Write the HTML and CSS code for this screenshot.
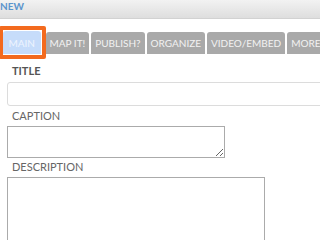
FILE: index.html
```html
<!DOCTYPE html>
<html lang="en">
  <head>
    <meta charset="UTF-8" />
    <meta name="viewport" content="width=device-width, initial-scale=1" />
    <title>New Item</title>
    <link rel="stylesheet" href="styles.css">
  </head>
  <body>
    <header class="top-bar">
      <span class="top-title">NEW</span>
    </header>

    <nav class="tabs">
      <a class="tab tab-active" href="#">MAIN</a>
      <a class="tab" href="#">MAP IT!</a>
      <a class="tab" href="#">PUBLISH?</a>
      <a class="tab" href="#">ORGANIZE</a>
      <a class="tab" href="#">VIDEO/EMBED</a>
      <a class="tab" href="#">MORE</a>
    </nav>

    <form class="edit-form">
      <label class="field-label field-label-strong" for="title">TITLE</label>
      <input class="title-input" id="title" type="text" />

      <label class="field-label" for="caption">CAPTION</label>
      <textarea class="caption-box" id="caption"></textarea>

      <label class="field-label" for="description">DESCRIPTION</label>
      <textarea class="description-box" id="description"></textarea>
    </form>
  </body>
</html>
```

FILE: styles.css
```css
html,
body {
  margin: 0;
  padding: 0;
  overflow: hidden;
  background: #fff;
  font-family: Lato, "Open Sans", Arial, sans-serif;
}
.top-bar {
  height: 18px;
  background: linear-gradient(#f2f2f2, #dedede);
  border-bottom: 1px solid #d2d2d2;
}
.top-title {
  display: block;
  color: #5b95cd;
  font-size: 10px;
  font-weight: 700;
  line-height: 13px;
}
.tabs {
  display: flex;
  align-items: flex-end;
  gap: 2px;
  margin-top: 12px;
  padding-left: 3px;
  white-space: nowrap;
}
.tab {
  flex: none;
  height: 22px;
  line-height: 22px;
  padding: 0 4px;
  background: #a9a9a9;
  color: #f2f2f2;
  font-size: 10px;
  text-decoration: none;
  border-radius: 3px 3px 0 0;
}
.tab-active {
  position: relative;
  height: 23px;
  line-height: 24px;
  margin-right: 3px;
  padding: 0 5.5px;
  background: #c6dcfa;
  color: #eef4fe;
}
.tab-active::after {
  content: "";
  position: absolute;
  top: -5px;
  left: -4px;
  right: -5px;
  bottom: -5px;
  border: 4px solid #f36a1e;
  border-radius: 2px;
}
.edit-form {
  padding: 10px 0 0 7px;
}
.field-label {
  display: block;
  padding-left: 5px;
  margin-bottom: 4px;
  color: #666;
  font-size: 11px;
  line-height: 13px;
}
.field-label-strong {
  color: #555;
  font-weight: 700;
  margin-bottom: 5px;
}
.title-input {
  display: block;
  box-sizing: border-box;
  width: 400px;
  height: 24px;
  margin: 0 0 3px 0;
  border: 1px solid #dcdcdc;
  border-radius: 3px;
  background: #fff;
}
.caption-box,
.description-box {
  display: block;
  box-sizing: border-box;
  margin: 0;
  border: 1px solid #ababab;
  border-radius: 0;
  background: #fff;
}
.caption-box {
  width: 218px;
  height: 32px;
  margin-bottom: 2px;
}
.description-box {
  width: 258px;
  height: 120px;
  margin-top: 1px;
}
```
